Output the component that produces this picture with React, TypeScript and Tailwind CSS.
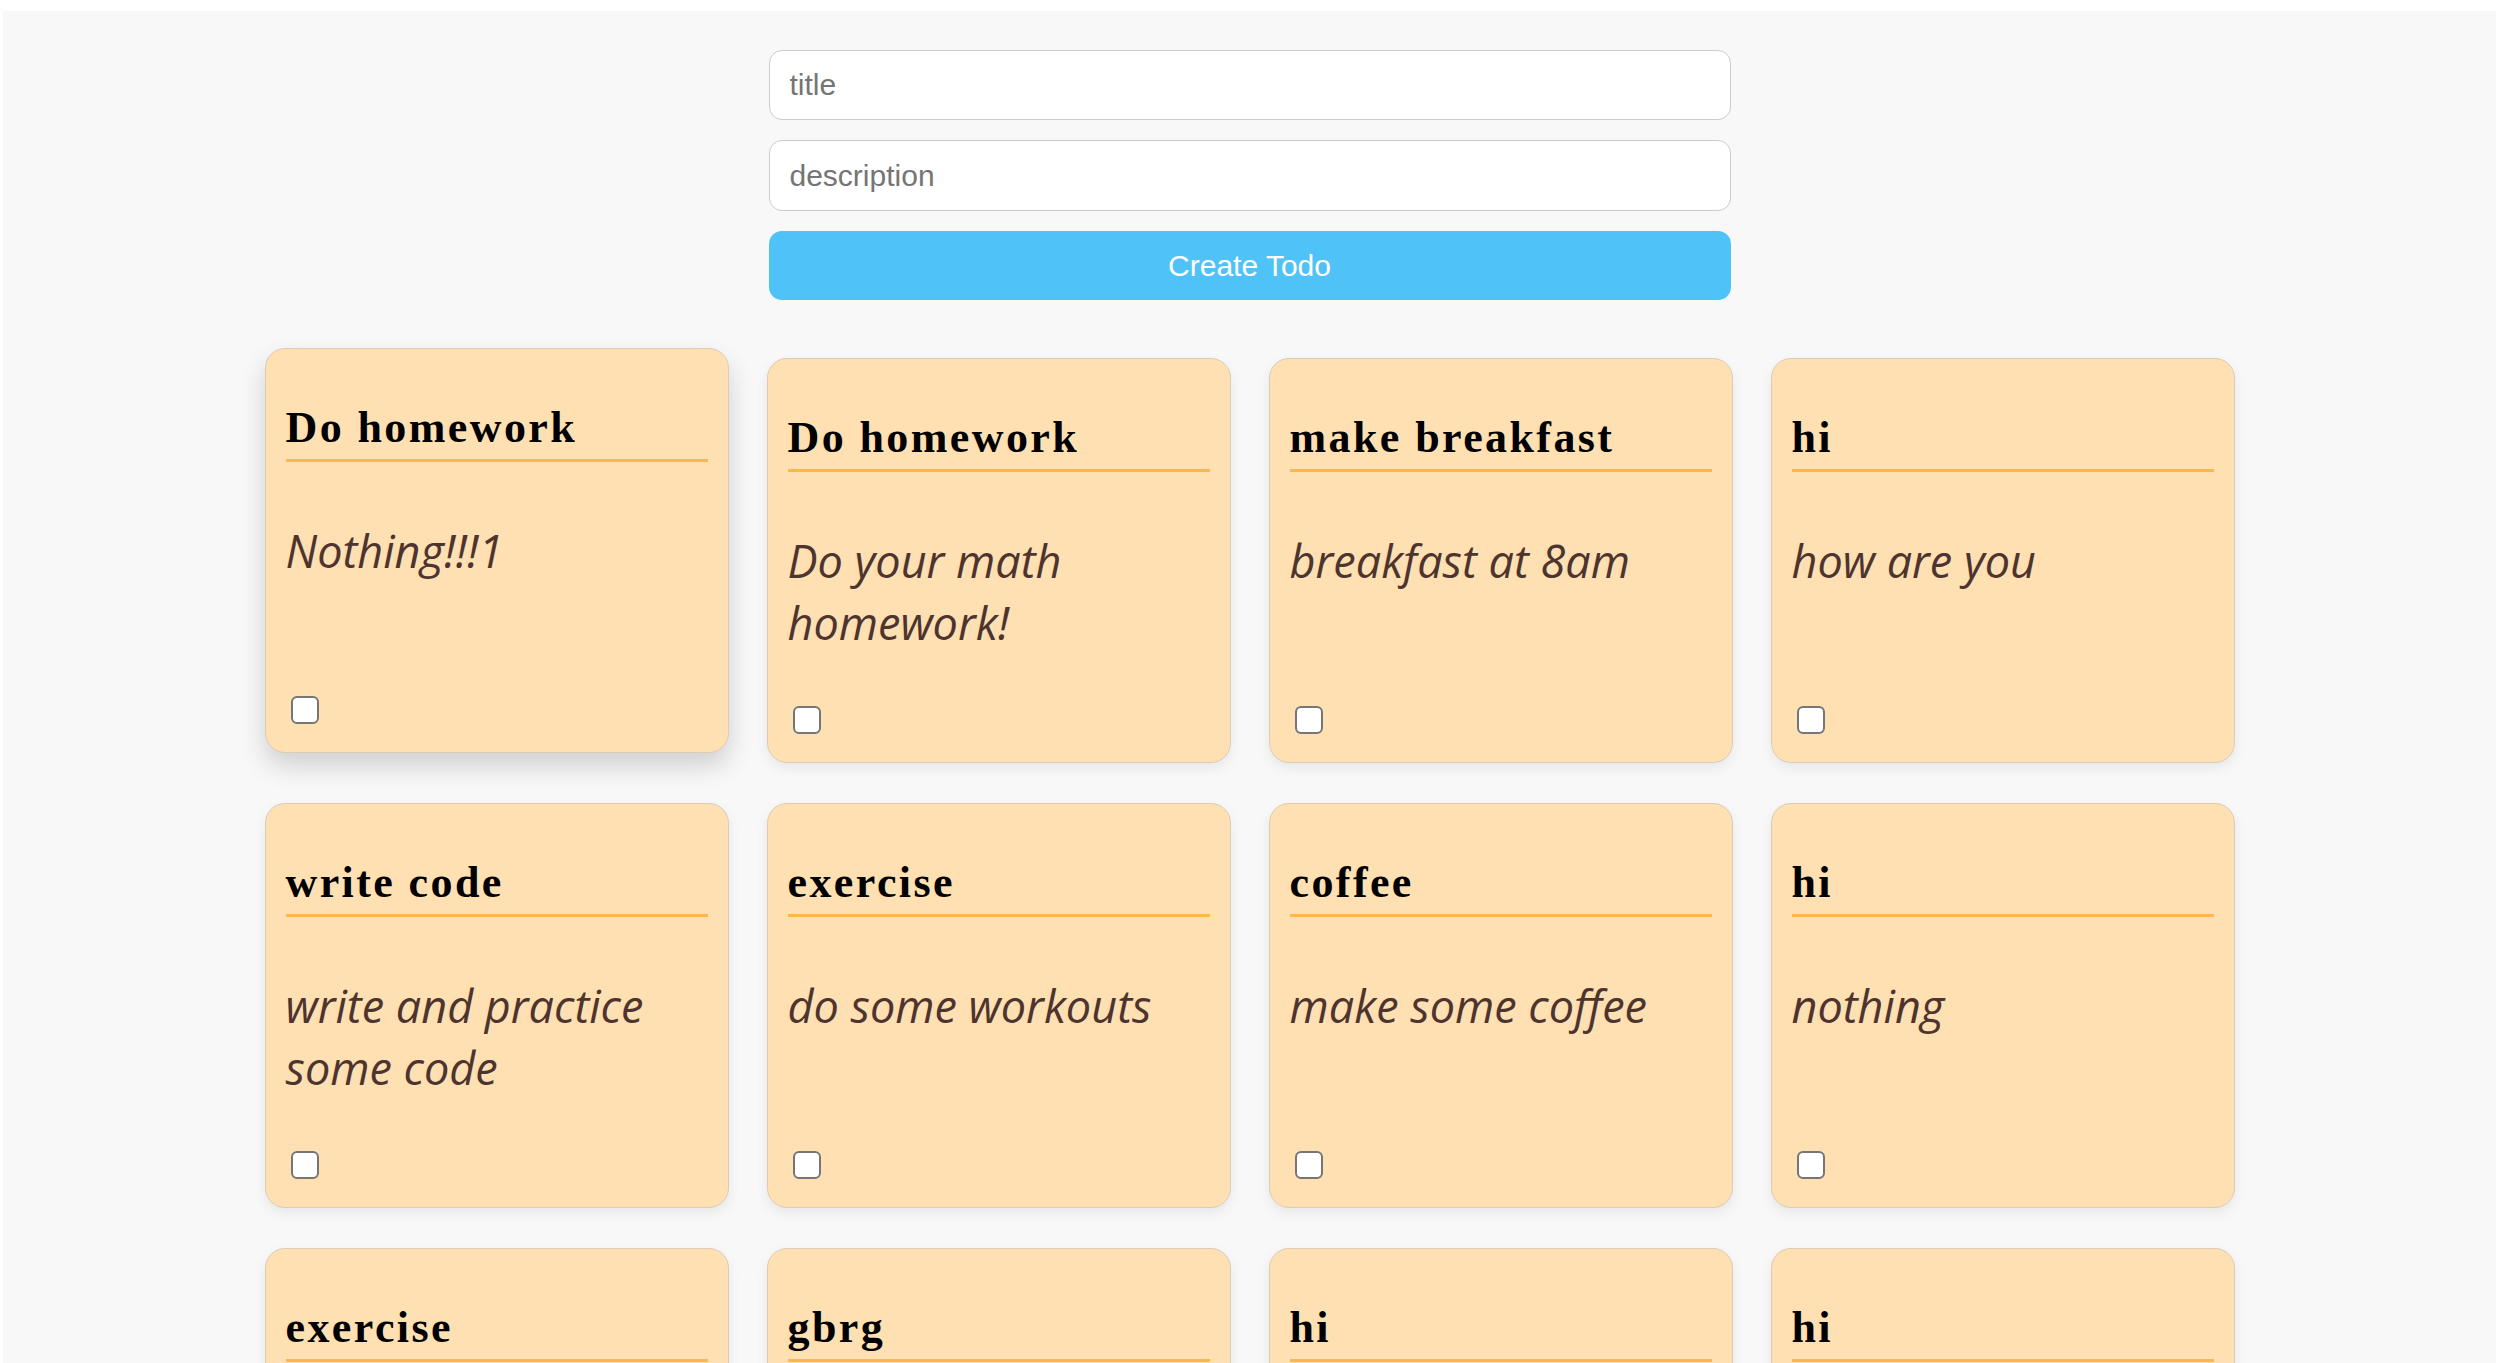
import { useState } from "react";

type Todo = {
  id: number;
  title: string;
  description: string;
  done: boolean;
};

const initialTodos: Todo[] = [
  { id: 1, title: "Do homework", description: "Nothing!!!1", done: false },
  { id: 2, title: "Do homework", description: "Do your math homework!", done: false },
  { id: 3, title: "make breakfast", description: "breakfast at 8am", done: false },
  { id: 4, title: "hi", description: "how are you", done: false },
  { id: 5, title: "write code", description: "write and practice some code", done: false },
  { id: 6, title: "exercise", description: "do some workouts", done: false },
  { id: 7, title: "coffee", description: "make some coffee", done: false },
  { id: 8, title: "hi", description: "nothing", done: false },
  { id: 9, title: "exercise", description: "go for a run", done: false },
  { id: 10, title: "gbrg", description: "gbrg", done: false },
  { id: 11, title: "hi", description: "hello", done: false },
  { id: 12, title: "hi", description: "hey", done: false },
];

function TodoCard({ todo, lifted, onToggle }: { todo: Todo; lifted: boolean; onToggle: () => void }) {
  return (
    <div
      className={
        lifted
          ? "flex h-[405px] flex-col rounded-[20px] border border-[#dccbb8] bg-[#ffe0b2] px-[20px] pt-[20px] pb-[28px] -translate-y-[10px] shadow-[0_13px_26px_rgba(0,0,0,0.16)]"
          : "flex h-[405px] flex-col rounded-[20px] border border-[#dccbb8] bg-[#ffe0b2] px-[20px] pt-[20px] pb-[28px] shadow-[0_5px_13px_rgba(0,0,0,0.07)]"
      }
    >
      <h2 className="mt-[35px] border-b-[3px] border-[#ffb74d] pb-[7px] font-['Liberation_Serif',serif] text-[44px] font-bold leading-[48px] tracking-[2.4px] text-black">
        {todo.title}
      </h2>
      <p className="mt-[58px] font-['Open_Sans',sans-serif] text-[45px] italic leading-[62px] text-[#4e342e]">
        {todo.description}
      </p>
      <button
        type="button"
        onClick={onToggle}
        className="mt-auto ml-[5px] flex h-[28px] w-[28px] items-center justify-center rounded-[6px] border-2 border-[#767676] bg-white"
      >
        {todo.done ? <span className="h-[12px] w-[12px] rounded-[2px] bg-[#4fc3f7]" /> : null}
      </button>
    </div>
  );
}

export default function App() {
  const [title, setTitle] = useState("");
  const [description, setDescription] = useState("");
  const [todos, setTodos] = useState<Todo[]>(initialTodos);

  const addTodo = () => {
    if (!title.trim()) return;
    setTodos((t) => [...t, { id: Date.now(), title, description, done: false }]);
    setTitle("");
    setDescription("");
  };

  return (
    <div className="min-h-screen bg-white pt-[11px] pl-[3px] pr-[11px]">
      <div className="flex min-h-screen flex-col items-center bg-[#f8f8f8] pt-[39px] pb-[60px]">
        <div className="flex w-[962px] flex-col gap-[20px]">
          <input
            value={title}
            onChange={(e) => setTitle(e.target.value)}
            placeholder="title"
            className="h-[70px] w-full rounded-[13px] border border-[#cccccc] bg-white px-[20px] font-['Liberation_Sans',Arial,sans-serif] text-[30px] text-[#333] outline-none placeholder:text-[#757575]"
          />
          <input
            value={description}
            onChange={(e) => setDescription(e.target.value)}
            placeholder="description"
            className="h-[71px] w-full rounded-[13px] border border-[#cccccc] bg-white px-[20px] font-['Liberation_Sans',Arial,sans-serif] text-[30px] text-[#333] outline-none placeholder:text-[#757575]"
          />
          <button
            type="button"
            onClick={addTodo}
            className="h-[69px] w-full rounded-[13px] bg-[#4fc3f7] font-['Liberation_Sans',Arial,sans-serif] text-[30px] text-white"
          >
            Create Todo
          </button>
        </div>

        <div className="mt-[58px] grid w-[1970px] grid-cols-4 gap-x-[38px] gap-y-[40px]">
          {todos.map((t, i) => (
            <TodoCard
              key={t.id}
              todo={t}
              lifted={i === 0}
              onToggle={() => setTodos((all) => all.map((x) => (x.id === t.id ? { ...x, done: !x.done } : x)))}
            />
          ))}
        </div>
      </div>
    </div>
  );
}
